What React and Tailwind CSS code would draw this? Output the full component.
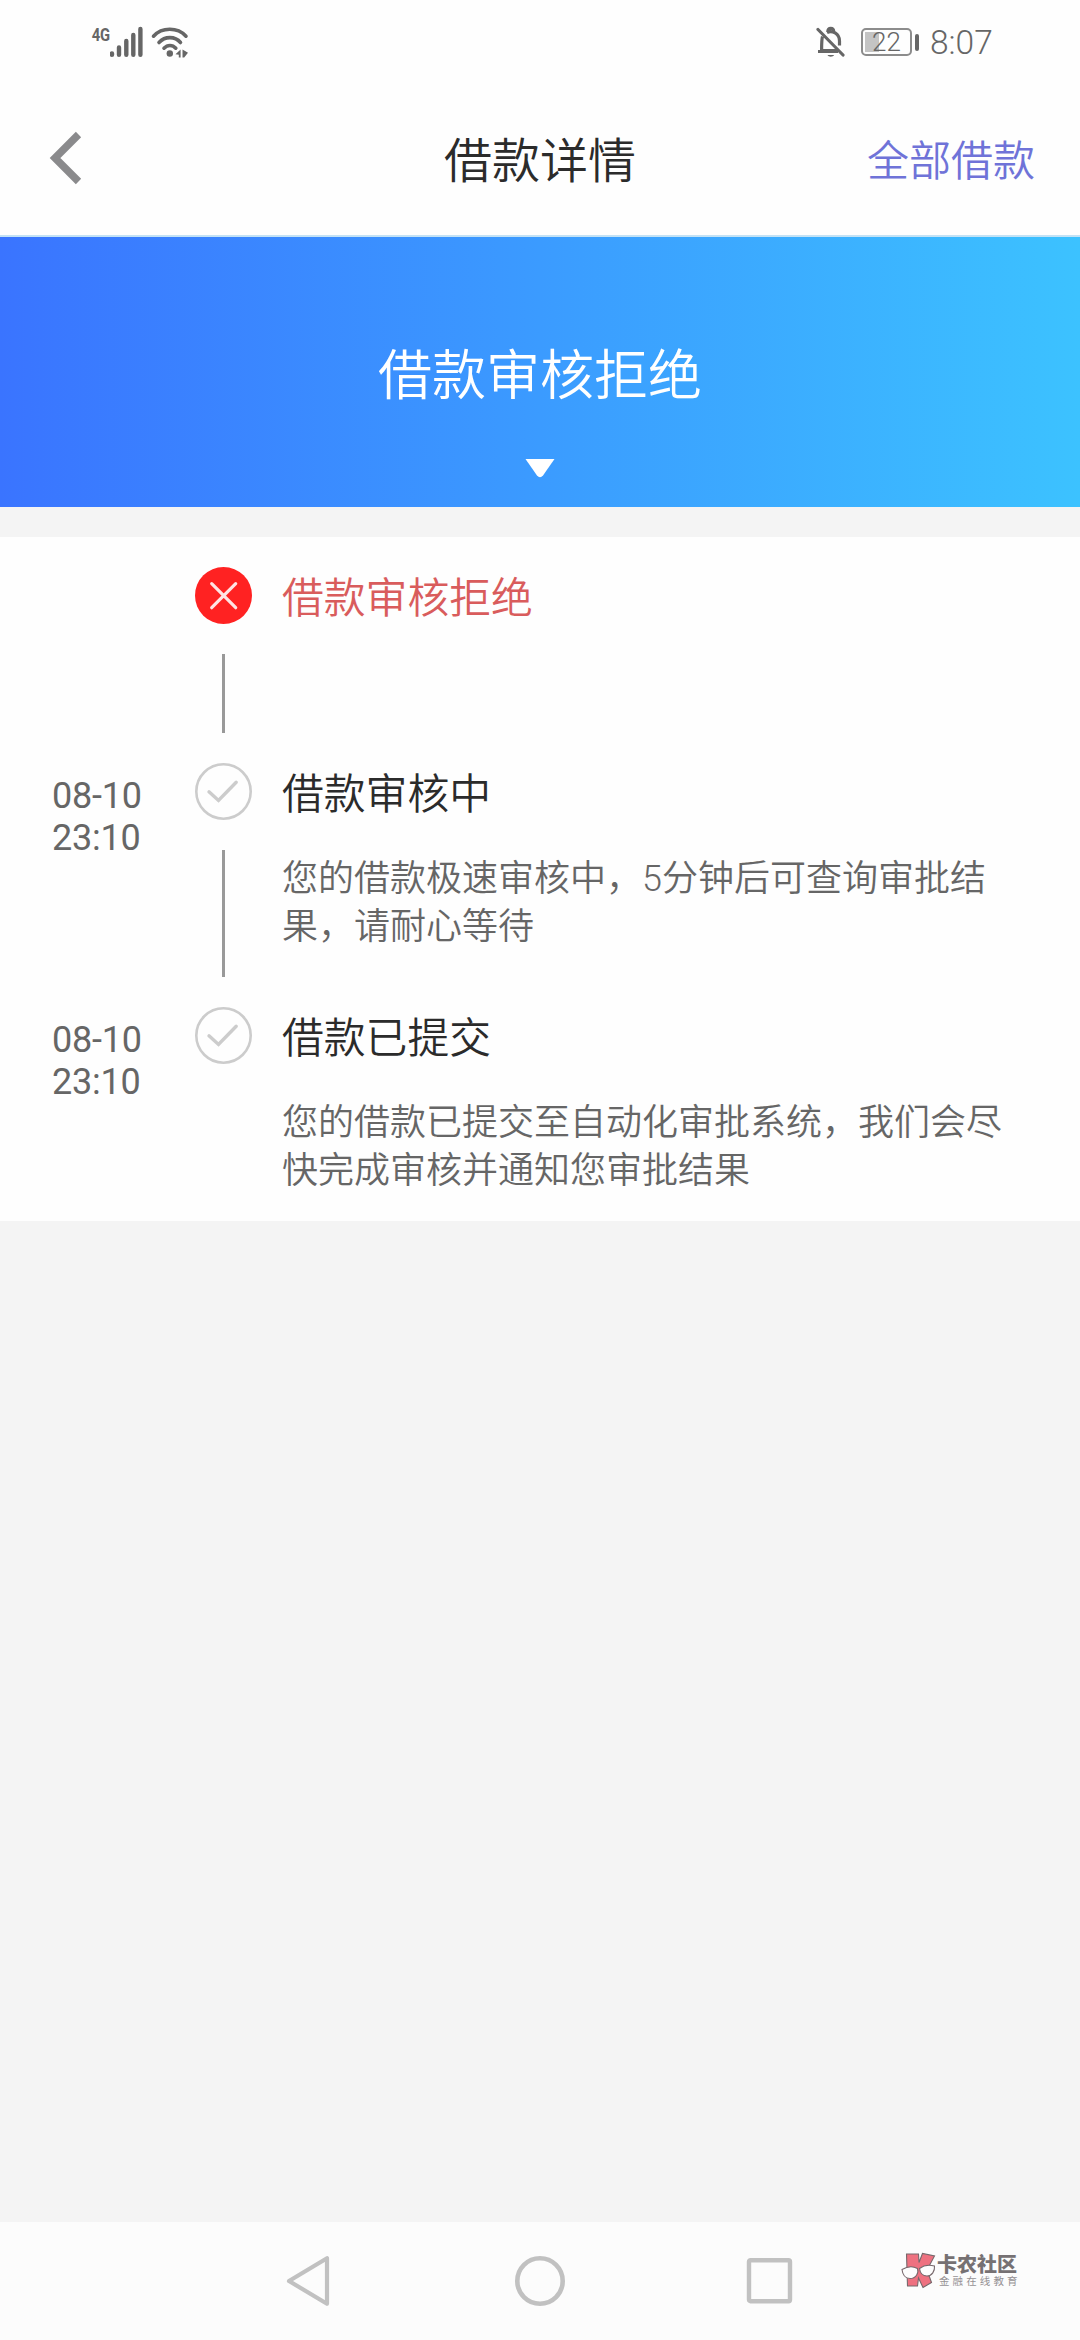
import { useState } from 'react'

// Timeline records, newest first
const records = [
  { id: 3, status: 'rejected', title: '借款审核拒绝' },
  {
    id: 2,
    status: 'done',
    title: '借款审核中',
    date: '08-10',
    time: '23:10',
    lines: ['您的借款极速审核中，5分钟后可查询审批结', '果，请耐心等待'],
  },
  {
    id: 1,
    status: 'done',
    title: '借款已提交',
    date: '08-10',
    time: '23:10',
    lines: ['您的借款已提交至自动化审批系统，我们会尽', '快完成审核并通知您审批结果'],
  },
]

function StatusBar() {
  return (
    <div className="flex h-[84px] items-center justify-between pl-[90px] pr-[87px] text-[#666666]">
      <div className="flex items-center">
        {/* Network type and signal bars */}
        <div className="flex h-[32px] items-start">
          <span className="w-[20px] origin-left scale-x-[0.82] pl-[2px] text-[18px] leading-[18px] font-bold">4G</span>
        </div>
        <svg width="34" height="32" viewBox="0 0 34 32" fill="none" stroke="currentColor" strokeWidth="4.4" strokeLinecap="round">
          <path d="M2 27.4v1.4M9 21.5v7.3M16.3 15v13.8M23.3 9v19.8M30.4 3v25.8" />
        </svg>
        {/* Wifi */}
        <svg className="ml-[6px]" width="40" height="32" viewBox="0 0 40 32" fill="none" stroke="currentColor" strokeWidth="3.6" strokeLinecap="round">
          <path d="M3.5 10.2C12 1 27.5 1 36 10.2M9 16.5C15 10 25 10 30.5 16.5M14 22.2C17.5 18.5 22.5 18.5 25.8 22.2" />
          <circle cx="19.8" cy="27.5" r="3.2" fill="currentColor" stroke="none" />
          <path d="M25.5 28.2L30.6 23.500v8h-1.800v-2.800zM32.500 23.500l5.500 3.200-3.800 4.800h-1.700z" fill="currentColor" stroke="none" />
        </svg>
      </div>
      <div className="flex items-center">
        {/* Muted bell */}
        <svg width="30" height="32" viewBox="0 0 30 32" fill="none" stroke="currentColor" strokeWidth="3.2">
          <path d="M2 3.5L27 29" strokeLinecap="round" />
          <path d="M6.5 10.5C5.6 13 5.6 15 5.6 24.5H21M2 25.5H22M11 6.5C16 3.8 23.5 7.5 23.5 15v4.5" />
          <path d="M11.8 5.8C12 1.3 17.5 1.3 17.8 5.8" />
          <path d="M11.5 29h6.600c-1 2.200-5.600 2.200-6.600 0z" fill="currentColor" stroke="none" />
        </svg>
        {/* Battery */}
        <div className="ml-[15px] flex items-center gap-[3px]">
          <div className="relative flex h-[28px] w-[51px] items-center justify-center rounded-[5px] border-2 border-[#8c8c8c]">
            <div className="absolute top-[2px] bottom-[2px] left-[2px] w-[14px] bg-[#c4c4c4]" />
            <span className="relative text-[26px] leading-none font-[350]">22</span>
          </div>
          <div className="h-[17px] w-[4px] rounded-full bg-[#666666]" />
        </div>
        <span className="ml-[11px] w-[63px] pt-[2px] text-[33.5px] leading-none font-[350]">8:07</span>
      </div>
    </div>
  )
}

function Header() {
  return (
    <header className="grid h-[151px] grid-cols-3 items-center">
      <button className="justify-self-start pb-[4px] pl-[48px]">
        <svg width="36" height="54" viewBox="0 0 36 54" fill="none" stroke="#8a8a8c" strokeWidth="7.5">
          <path d="M30.5 3.5L7 27l23.500 23.500" />
        </svg>
      </button>
      <h1 className="justify-self-center pt-[4px] text-[48px] leading-none font-[350] text-[#2b2b2b]">借款详情</h1>
      <button className="justify-self-end pt-[4px] pr-[45px] text-[42px] leading-none font-[350] text-[#6f73d8]">全部借款</button>
    </header>
  )
}

function StepIcon({ status }) {
  if (status === 'rejected') {
    return (
      <svg width="57" height="57" viewBox="0 0 57 57" fill="none">
        <circle cx="28.5" cy="28.5" r="28.5" fill="#ff2222" />
        <path d="M16.7 16.7l24 24M40.7 16.7l-24 24" stroke="#ffe4e4" strokeWidth="3.2" strokeLinecap="round" />
      </svg>
    )
  }
  return (
    <svg width="57" height="57" viewBox="0 0 57 57" fill="none" stroke="#cccccc">
      <circle cx="28.5" cy="28.5" r="27.2" strokeWidth="2.6" />
      <path d="M14 28.8l9.500 8.700L41.200 19.200" strokeWidth="3.4" strokeLinecap="round" />
    </svg>
  )
}

function TimelineItem({ item, isLast }) {
  return (
    <li className="flex">
      {/* Date column */}
      <div className="w-[195px] pt-[12px] pl-[52px] text-[36px] leading-[42px] tracking-[-0.2px] text-[#666666]">
        <p>{item.date}</p>
        <p>{item.time}</p>
      </div>
      {/* Icon and connector */}
      <div className="flex w-[57px] flex-col items-center">
        <StepIcon status={item.status} />
        {!isLast && <div className="my-[30px] min-h-[79px] w-[3px] flex-1 bg-[#999999]" />}
      </div>
      <div className="pl-[30px]">
        <h2
          className={
            item.status === 'rejected'
              ? 'pt-[8px] text-[41.8px] leading-[48px] font-[350] text-[#d95c5c]'
              : 'pt-[8px] text-[41.8px] leading-[48px] font-[350] text-[#2b2b2b]'
          }
        >
          {item.title}
        </h2>
        {item.lines && (
          <div className="pt-[36px] pb-[56px] text-[36px] leading-[48px] font-[350] whitespace-nowrap text-[#666666]">
            {item.lines.map((line) => (
              <p key={line}>{line}</p>
            ))}
          </div>
        )}
      </div>
    </li>
  )
}

function NavBar() {
  return (
    <nav className="relative flex h-[118px] items-center justify-center bg-[#fcfcfc]">
      <div className="flex items-center gap-[179px]">
        <svg width="52" height="52" viewBox="0 0 52 52" fill="none" stroke="#c1c1c1" strokeWidth="4.2" strokeLinejoin="round">
          <path d="M44 3.2v45.600L6 26z" />
        </svg>
        <svg width="52" height="52" viewBox="0 0 52 52" fill="none" stroke="#c1c1c1" strokeWidth="4.6">
          <circle cx="26" cy="26" r="22.7" />
        </svg>
        <svg width="52" height="52" viewBox="0 0 52 52" fill="none" stroke="#c1c1c1" strokeWidth="4.4">
          <rect x="4" y="5.2" width="41" height="41" rx="1.5" />
        </svg>
      </div>
      <Watermark />
    </nav>
  )
}

// Community logo over the right end of the navigation bar
function Watermark() {
  return (
    <div className="absolute top-[30px] left-[900px] flex">
      <svg width="37" height="38" viewBox="0 0 37 38" stroke="#77686c" strokeWidth="1.1">
        <path d="M6.5 2H18.5L19 10.5L22.5 1.5L34.5 4L27 18L31.5 30.5L23 35.5L18.5 26L17.5 34H7.5z" fill="#ee7180" />
        <path d="M2 17.5C7 14.5 13 14 17.5 16.5C19 21 16 26.5 10 26.5C5 26.5 2.5 22 2 17.5zM19.5 16.5C24 13 29 12.5 34.5 14C35 19 32 24 27 24C22 24 20 20 19.5 16.5z" fill="#fdfdfd" />
      </svg>
      <div className="pt-[3px] text-[#767173]">
        <p className="text-[20px] leading-[20px] font-black">卡农社区</p>
        <p className="pt-[1px] pl-[2px] text-[10.5px] leading-[12px] tracking-[3.1px] whitespace-nowrap text-[#969294]">金融在线教育</p>
      </div>
    </div>
  )
}

export default function App() {
  const [items] = useState(records)

  return (
    <div className="flex h-[2340px] w-[1080px] flex-col overflow-hidden bg-[#f4f4f4] font-[Roboto,'Noto_Sans_CJK_SC',sans-serif]">
      <div className="border-b-2 border-[#c3e2f5] bg-[#fefefe]">
        <StatusBar />
        <Header />
      </div>

      {/* Current status banner */}
      <section className="flex h-[270px] flex-col items-center bg-linear-to-r/srgb from-[#3a74ff] to-[#3cc2ff] pt-[113px]">
        <p className="text-[54px] leading-[54px] font-[350] text-white">借款审核拒绝</p>
        <svg className="mt-[55px]" width="30" height="19" viewBox="0 0 30 19" fill="#ffffff">
          <path d="M.5 0h29L18 16.5q-3 3.500-6 0z" />
        </svg>
      </section>

      {/* Review progress */}
      <ul className="mt-[30px] h-[684px] bg-[#fefefe] pt-[30px]">
        {items.map((item, index) => (
          <TimelineItem key={item.id} item={item} isLast={index === items.length - 1} />
        ))}
      </ul>

      <div className="mt-auto">
        <NavBar />
      </div>
    </div>
  )
}
